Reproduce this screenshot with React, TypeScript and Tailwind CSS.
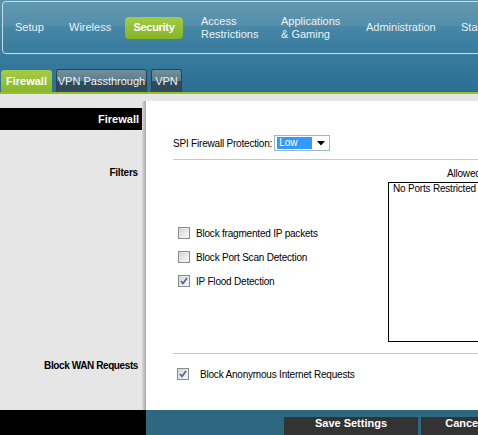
import React from "react";

const sans = { fontFamily: '"Liberation Sans", Arial, sans-serif' };

function Check({ checked }: { checked?: boolean }) {
  return (
    <div className="w-[12px] h-[12px] border border-[#8c8c8c] bg-gradient-to-br from-[#d6d6d6] to-[#f8f8f8] flex items-center justify-center shrink-0">
      {checked && (
        <svg width="8" height="8" viewBox="0 0 8 8">
          <path d="M1 4 L3 6.5 L7 1" stroke="#4a5fa8" strokeWidth="1.6" fill="none" />
        </svg>
      )}
    </div>
  );
}

export default function App() {
  const nav = [
    { t: "Setup", w: "w-[54px]" },
    { t: "Wireless", w: "w-[64px]" },
    { t: "Security", active: true, w: "w-[58px]" },
    { t: "Access", t2: "Restrictions", w: "w-[80px]" },
    { t: "Applications", t2: "& Gaming", w: "w-[85px]" },
    { t: "Administration", w: "w-[95px]" },
    { t: "Status", w: "w-[80px]" },
  ];
  return (
    <div className="w-[478px] h-[435px] overflow-hidden bg-[#e6e6e6] text-black" style={sans}>
      <div className="w-[700px]">
        {/* Header */}
        <div className="h-[92px] bg-gradient-to-b from-[#5a94ad] via-[#3b7ea0] to-[#2a6f93] pt-[1px] flex flex-col">
          <div className="ml-[2px] h-[53px] border border-[#c6dde8] rounded-[4px] relative overflow-hidden">
            <div className="absolute inset-x-0 top-0 h-[24px] bg-white/[0.06]" />
            <div className="relative flex items-center h-full -ml-px">
              {nav.map((n) =>
                n.active ? (
                  <div key={n.t} className={`mx-[5px] ${n.w} h-[22px] rounded-[4px] bg-gradient-to-b from-[#a2cb45] to-[#86b526] flex items-center justify-center text-white font-bold text-[11px] tracking-[-0.3px]`}>
                    {n.t}
                  </div>
                ) : (
                  <div key={n.t} className={`${n.w} shrink-0 pl-[13px] text-[11px] leading-[13px] text-[#eaf2f6] whitespace-nowrap`}>
                    <div>{n.t}</div>
                    {n.t2 && <div>{n.t2}</div>}
                  </div>
                )
              )}
            </div>
          </div>
          <div className="mt-auto flex items-end pl-[1px] gap-[4px]">
            <div className="h-[22px] w-[51px] rounded-t-[3px] bg-gradient-to-b from-[#a4cc48] to-[#89b72a] flex items-center justify-center text-white font-bold text-[11px]">
              Firewall
            </div>
            <div className="h-[23px] w-[91px] rounded-t-[3px] border border-b-0 border-[#2c4150] flex flex-col overflow-hidden relative">
              <div className="h-1/2 bg-gradient-to-b from-[#73909e] to-[#5e7a89]" />
              <div className="h-1/2 bg-[#2f4b5b]" />
              <div className="absolute inset-0 flex items-center justify-center text-[#eef3f6] text-[11px]">VPN Passthrough</div>
            </div>
            <div className="h-[23px] w-[31px] rounded-t-[3px] border border-b-0 border-[#2c4150] flex flex-col overflow-hidden relative">
              <div className="h-1/2 bg-gradient-to-b from-[#73909e] to-[#5e7a89]" />
              <div className="h-1/2 bg-[#2f4b5b]" />
              <div className="absolute inset-0 flex items-center justify-center text-[#eef3f6] text-[11px]">VPN</div>
            </div>
          </div>
        </div>
        <div className="h-[2px] bg-[#95c02a]" />

        {/* Body */}
        <div className="flex h-[316px]">
          <div className="w-[142px] shrink-0 flex flex-col">
            <div className="h-[14px]" />
            <div className="h-[22px] bg-black text-white font-bold text-[11px] flex items-center justify-end pr-[4px] w-[143px]">
              Firewall
            </div>
            <div className="mt-[36px] h-[13px] leading-[13px] text-right pr-[4px] font-bold text-[10px] tracking-[-0.2px]">Filters</div>
            <div className="mt-[180px] h-[13px] leading-[13px] text-right pr-[4px] font-bold text-[10px] tracking-[-0.4px]">Block WAN Requests</div>
          </div>
          <div className="flex-1 pt-[7px] flex flex-col">
            <div className="flex flex-1">
              <div className="w-[4px] bg-gradient-to-r from-[#d9d9d9] to-[#a9a9a9] rounded-tl-[2px]" />
              <div className="flex-1 bg-white pl-[27px] flex flex-col text-[10px]">
                <div className="mt-[34px] h-[16px] flex items-center">
                  <span className="tracking-[-0.2px]">SPI Firewall Protection:</span>
                  <div className="ml-[2px] w-[56px] h-[16px] border border-[#9fb6c9] flex items-center pl-[2px] pr-[4px]">
                    <div className="w-[35px] h-[12px] bg-[#3399ff] border border-dotted border-[#c47a2c] text-white leading-[10px] pl-[1px]">Low</div>
                    <svg className="ml-auto" width="8" height="5" viewBox="0 0 8 5"><path d="M0 0 H8 L4 4.5 Z" fill="#000" /></svg>
                  </div>
                </div>
                <div className="mt-[8px] h-[1px] bg-[#c8c8c8]" />
                <div className="flex h-[182px]">
                  <div className="w-[215px] pl-[5px] pt-[67px] flex flex-col gap-[12px]">
                    <div className="flex items-center h-[12px]"><Check /><span className="ml-[6px] tracking-[-0.2px]">Block fragmented IP packets</span></div>
                    <div className="flex items-center h-[12px]"><Check /><span className="ml-[6px] tracking-[-0.2px]">Block Port Scan Detection</span></div>
                    <div className="flex items-center h-[12px]"><Check checked /><span className="ml-[6px] tracking-[-0.2px]">IP Flood Detection</span></div>
                  </div>
                  <div className="flex flex-col">
                    <div className="mt-[8px] h-[12px] leading-[12px] pl-[59px] tracking-[-0.2px]">Allowed Ports</div>
                    <div className="mt-[2px] w-[200px] h-[160px] border border-black pl-[4px] leading-[12px] tracking-[-0.2px]">No Ports Restricted</div>
                  </div>
                </div>
                <div className="mt-[11px] h-[1px] bg-[#c8c8c8]" />
                <div className="mt-[14px] pl-[4px] flex items-center h-[12px]">
                  <Check checked />
                  <span className="ml-[11px] tracking-[-0.2px]">Block Anonymous Internet Requests</span>
                </div>
              </div>
            </div>
          </div>
        </div>

        {/* Footer */}
        <div className="flex h-[40px]">
          <div className="w-[146px] bg-black" />
          <div className="flex-1 bg-[#2e6780] pt-[7px] pl-[138px] flex gap-[3px]">
            <div className="w-[134px] h-[20px] bg-[#333333] text-white font-bold text-[11px] leading-[13px] flex justify-center pt-[0px]">Save Settings</div>
            <div className="w-[134px] h-[20px] bg-[#333333] text-white font-bold text-[11px] leading-[13px] flex justify-center pt-[0px]">Cancel Changes</div>
          </div>
        </div>
      </div>
    </div>
  );
}
